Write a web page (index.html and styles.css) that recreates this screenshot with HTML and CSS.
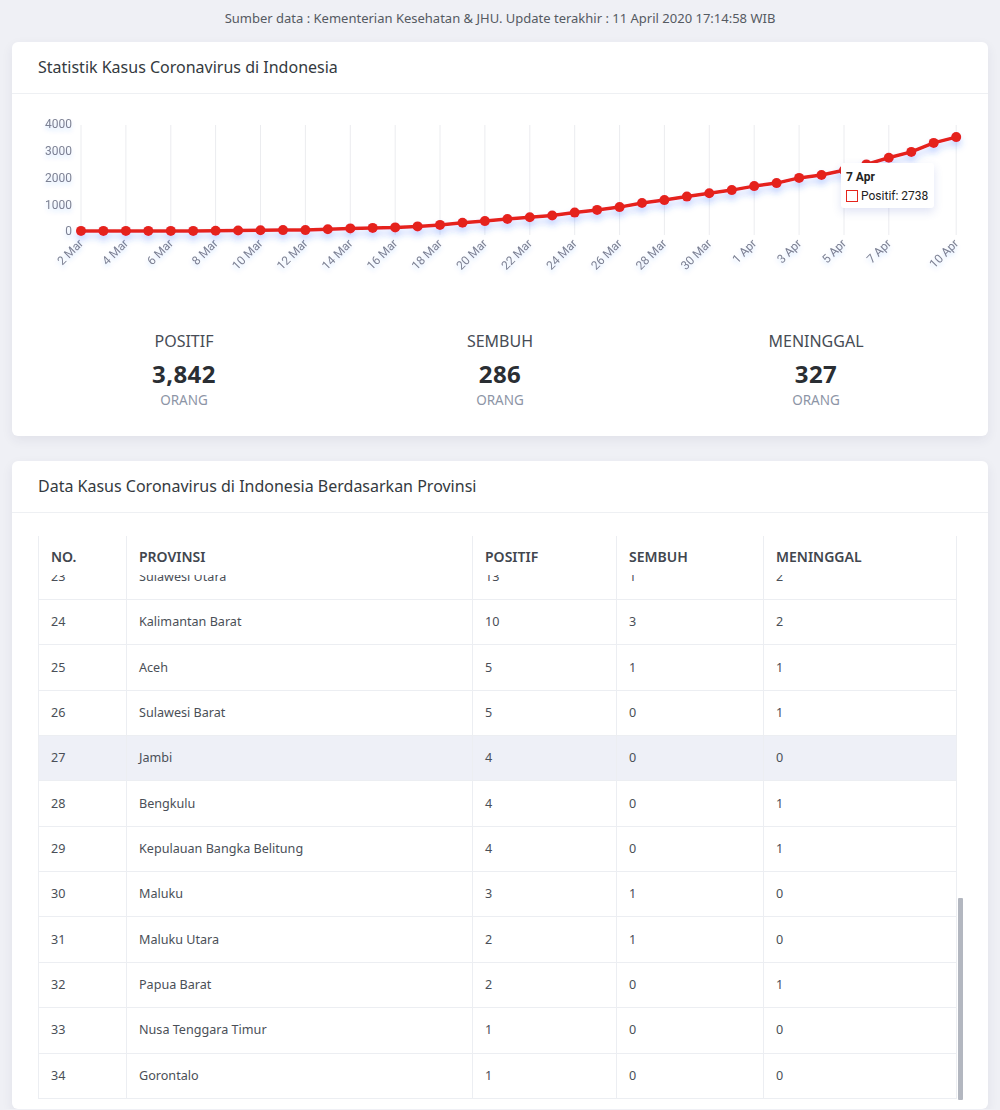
FILE: index.html
```html
<!DOCTYPE html>
<html lang="id">
<head>
<meta charset="utf-8">
<title>Statistik Kasus Coronavirus di Indonesia</title>
<link rel="stylesheet" href="styles.css">
</head>
<body>
<p class="source">Sumber data : Kementerian Kesehatan &amp; JHU. Update terakhir : 11 April 2020 17:14:58 WIB</p>

<section class="card">
  <header class="card-header">Statistik Kasus Coronavirus di Indonesia</header>
  <div class="chart-wrap">
    <svg class="chart" viewBox="12 100 976 190" width="976" height="190">
      <defs>
        <filter id="glow" x="-5%" y="-30%" width="110%" height="170%">
          <feDropShadow dx="0" dy="5" stdDeviation="3" flood-color="#2f6bff" flood-opacity="0.28"/>
        </filter>
        <filter id="tglow" x="-20%" y="-20%" width="140%" height="160%">
          <feDropShadow dx="0" dy="3" stdDeviation="2" flood-color="#2f6bff" flood-opacity="0.18"/>
        </filter>
      </defs>
      <g class="grid">
        <line x1="81" y1="125" x2="81" y2="235"/>
        <line x1="125.9" y1="125" x2="125.9" y2="235"/>
        <line x1="170.8" y1="125" x2="170.8" y2="235"/>
        <line x1="215.6" y1="125" x2="215.6" y2="235"/>
        <line x1="260.5" y1="125" x2="260.5" y2="235"/>
        <line x1="305.4" y1="125" x2="305.4" y2="235"/>
        <line x1="350.3" y1="125" x2="350.3" y2="235"/>
        <line x1="395.2" y1="125" x2="395.2" y2="235"/>
        <line x1="440" y1="125" x2="440" y2="235"/>
        <line x1="484.9" y1="125" x2="484.9" y2="235"/>
        <line x1="529.8" y1="125" x2="529.8" y2="235"/>
        <line x1="574.7" y1="125" x2="574.7" y2="235"/>
        <line x1="619.6" y1="125" x2="619.6" y2="235"/>
        <line x1="664.4" y1="125" x2="664.4" y2="235"/>
        <line x1="709.3" y1="125" x2="709.3" y2="235"/>
        <line x1="754.2" y1="125" x2="754.2" y2="235"/>
        <line x1="799.1" y1="125" x2="799.1" y2="235"/>
        <line x1="844" y1="125" x2="844" y2="235"/>
        <line x1="888.8" y1="125" x2="888.8" y2="235"/>
        <line x1="956.2" y1="125" x2="956.2" y2="235"/>
      </g>
      <g class="axis-label y-label" filter="url(#tglow)">
        <text x="72" y="128">4000</text>
        <text x="72" y="155">3000</text>
        <text x="72" y="182">2000</text>
        <text x="72" y="209">1000</text>
        <text x="72" y="235">0</text>
      </g>
      <g class="axis-label x-label" filter="url(#tglow)">
        <text x="84" y="244" transform="rotate(-45 84 244)">2 Mar</text>
        <text x="128.9" y="244" transform="rotate(-45 128.9 244)">4 Mar</text>
        <text x="173.8" y="244" transform="rotate(-45 173.8 244)">6 Mar</text>
        <text x="218.6" y="244" transform="rotate(-45 218.6 244)">8 Mar</text>
        <text x="263.5" y="244" transform="rotate(-45 263.5 244)">10 Mar</text>
        <text x="308.4" y="244" transform="rotate(-45 308.4 244)">12 Mar</text>
        <text x="353.3" y="244" transform="rotate(-45 353.3 244)">14 Mar</text>
        <text x="398.2" y="244" transform="rotate(-45 398.2 244)">16 Mar</text>
        <text x="443" y="244" transform="rotate(-45 443 244)">18 Mar</text>
        <text x="487.9" y="244" transform="rotate(-45 487.9 244)">20 Mar</text>
        <text x="532.8" y="244" transform="rotate(-45 532.8 244)">22 Mar</text>
        <text x="577.7" y="244" transform="rotate(-45 577.7 244)">24 Mar</text>
        <text x="622.6" y="244" transform="rotate(-45 622.6 244)">26 Mar</text>
        <text x="667.4" y="244" transform="rotate(-45 667.4 244)">28 Mar</text>
        <text x="712.3" y="244" transform="rotate(-45 712.3 244)">30 Mar</text>
        <text x="757.2" y="244" transform="rotate(-45 757.2 244)">1 Apr</text>
        <text x="802.1" y="244" transform="rotate(-45 802.1 244)">3 Apr</text>
        <text x="847" y="244" transform="rotate(-45 847 244)">5 Apr</text>
        <text x="891.8" y="244" transform="rotate(-45 891.8 244)">7 Apr</text>
        <text x="959.2" y="244" transform="rotate(-45 959.2 244)">10 Apr</text>
      </g>
      <g class="series" filter="url(#glow)">
        <polyline class="series-line" points="81,230.9 103.4,230.9 125.9,230.9 148.3,230.9 170.8,230.9 193.2,230.9 215.6,230.8 238.1,230.5 260.5,230.3 283,230.1 305.4,230.1 327.8,229.2 350.3,228.4 372.7,227.9 395.2,227.4 417.6,226.4 440,224.9 462.5,222.7 484.9,221.1 507.4,219 529.8,217.3 552.2,215.5 574.7,212.6 597.1,209.9 619.6,207.1 642,203 664.4,200.1 686.9,196.6 709.3,193.2 731.8,190.1 754.2,186.1 776.6,183.1 799.1,177.9 821.5,175 844,170.2 866.4,164.4 888.8,157.8 911.3,151.9 933.7,142.9 956.2,137.1"/>
        <g class="series-dot">
          <circle cx="81" cy="230.9" r="5"/><circle cx="103.4" cy="230.9" r="5"/><circle cx="125.9" cy="230.9" r="5"/><circle cx="148.3" cy="230.9" r="5"/><circle cx="170.8" cy="230.9" r="5"/><circle cx="193.2" cy="230.9" r="5"/><circle cx="215.6" cy="230.8" r="5"/><circle cx="238.1" cy="230.5" r="5"/><circle cx="260.5" cy="230.3" r="5"/><circle cx="283" cy="230.1" r="5"/><circle cx="305.4" cy="230.1" r="5"/><circle cx="327.8" cy="229.2" r="5"/><circle cx="350.3" cy="228.4" r="5"/><circle cx="372.7" cy="227.9" r="5"/><circle cx="395.2" cy="227.4" r="5"/><circle cx="417.6" cy="226.4" r="5"/><circle cx="440" cy="224.9" r="5"/><circle cx="462.5" cy="222.7" r="5"/><circle cx="484.9" cy="221.1" r="5"/><circle cx="507.4" cy="219" r="5"/><circle cx="529.8" cy="217.3" r="5"/><circle cx="552.2" cy="215.5" r="5"/><circle cx="574.7" cy="212.6" r="5"/><circle cx="597.1" cy="209.9" r="5"/><circle cx="619.6" cy="207.1" r="5"/><circle cx="642" cy="203" r="5"/><circle cx="664.4" cy="200.1" r="5"/><circle cx="686.9" cy="196.6" r="5"/><circle cx="709.3" cy="193.2" r="5"/><circle cx="731.8" cy="190.1" r="5"/><circle cx="754.2" cy="186.1" r="5"/><circle cx="776.6" cy="183.1" r="5"/><circle cx="799.1" cy="177.9" r="5"/><circle cx="821.5" cy="175" r="5"/><circle cx="844" cy="170.2" r="5"/><circle cx="866.4" cy="164.4" r="5"/><circle cx="888.8" cy="157.8" r="5"/><circle cx="911.3" cy="151.9" r="5"/><circle cx="933.7" cy="142.9" r="5"/><circle cx="956.2" cy="137.1" r="5"/>
        </g>
      </g>
    </svg>
    <div class="tooltip">
      <div class="tooltip-title">7 Apr</div>
      <div class="tooltip-row"><span class="tooltip-marker"></span>Positif: 2738</div>
    </div>
  </div>
  <div class="stats">
    <div class="stat">
      <div class="stat-label">POSITIF</div>
      <div class="stat-value">3,842</div>
      <div class="stat-unit">ORANG</div>
    </div>
    <div class="stat">
      <div class="stat-label">SEMBUH</div>
      <div class="stat-value">286</div>
      <div class="stat-unit">ORANG</div>
    </div>
    <div class="stat">
      <div class="stat-label">MENINGGAL</div>
      <div class="stat-value">327</div>
      <div class="stat-unit">ORANG</div>
    </div>
  </div>
</section>

<section class="card card-table">
  <header class="card-header">Data Kasus Coronavirus di Indonesia Berdasarkan Provinsi</header>
  <div class="table-body">
    <div class="table-box">
      <table class="data-table head">
        <colgroup><col class="c1"><col class="c2"><col class="c3"><col class="c4"><col class="c5"></colgroup>
        <thead>
          <tr><th>NO.</th><th>PROVINSI</th><th>POSITIF</th><th>SEMBUH</th><th>MENINGGAL</th></tr>
        </thead>
      </table>
      <div class="scroll-view">
        <table class="data-table rows">
          <colgroup><col class="c1"><col class="c2"><col class="c3"><col class="c4"><col class="c5"></colgroup>
          <tbody>
            <tr><td>23</td><td>Sulawesi Utara</td><td>13</td><td>1</td><td>2</td></tr>
            <tr><td>24</td><td>Kalimantan Barat</td><td>10</td><td>3</td><td>2</td></tr>
            <tr><td>25</td><td>Aceh</td><td>5</td><td>1</td><td>1</td></tr>
            <tr><td>26</td><td>Sulawesi Barat</td><td>5</td><td>0</td><td>1</td></tr>
            <tr class="hover"><td>27</td><td>Jambi</td><td>4</td><td>0</td><td>0</td></tr>
            <tr><td>28</td><td>Bengkulu</td><td>4</td><td>0</td><td>1</td></tr>
            <tr><td>29</td><td>Kepulauan Bangka Belitung</td><td>4</td><td>0</td><td>1</td></tr>
            <tr><td>30</td><td>Maluku</td><td>3</td><td>1</td><td>0</td></tr>
            <tr><td>31</td><td>Maluku Utara</td><td>2</td><td>1</td><td>0</td></tr>
            <tr><td>32</td><td>Papua Barat</td><td>2</td><td>0</td><td>1</td></tr>
            <tr><td>33</td><td>Nusa Tenggara Timur</td><td>1</td><td>0</td><td>0</td></tr>
            <tr><td>34</td><td>Gorontalo</td><td>1</td><td>0</td><td>0</td></tr>
          </tbody>
        </table>
      </div>
      <div class="scroll-thumb"></div>
    </div>
  </div>
</section>
</body>
</html>
```

FILE: styles.css
```css
* { box-sizing: border-box; }

html, body {
  margin: 0;
  padding: 0;
  background: #eff0f5;
  overflow: hidden;
}

body {
  padding: 8px 12px 0;
  font-family: "Noto Sans", "Open Sans", sans-serif;
  color: #333;
}

.source {
  margin: 0 0 14px;
  height: 20px;
  line-height: 20px;
  text-align: center;
  font-size: 13px;
  color: #555a62;
}

.card {
  background: #fff;
  border-radius: 6px;
  box-shadow: 0 4px 12px rgba(40, 45, 80, 0.07);
}

.card + .card {
  margin-top: 25px;
}

.card-header {
  height: 52px;
  padding: 0 26px;
  line-height: 51px;
  font-size: 16px;
  color: #343a40;
  border-bottom: 1px solid #eef0f3;
}

.chart-wrap {
  position: relative;
  margin-top: 6px;
  height: 190px;
}

.chart {
  display: block;
}

.grid line {
  stroke: #ebecef;
  stroke-width: 1;
}

.axis-label {
  font-family: Roboto, "Liberation Sans", sans-serif;
  font-size: 12px;
  fill: #7c8193;
}

.y-label text,
.x-label text {
  text-anchor: end;
}

.series-line {
  fill: none;
  stroke: #e5241c;
  stroke-width: 3.5;
  stroke-linejoin: round;
}

.series-dot circle {
  fill: #e5241c;
}

.tooltip {
  position: absolute;
  left: 829px;
  top: 63px;
  width: 93px;
  height: 45px;
  padding: 6px 5px 0;
  background: #fff;
  border-radius: 3px;
  box-shadow: 0 4px 10px rgba(60, 90, 190, 0.16);
  font-family: Roboto, "Liberation Sans", sans-serif;
  font-size: 12px;
  color: #222;
}

.tooltip-title {
  font-weight: 700;
  line-height: 16px;
}

.tooltip-row {
  display: flex;
  align-items: center;
  gap: 3px;
  margin-top: 3px;
  line-height: 16px;
}

.tooltip-marker {
  width: 12px;
  height: 12px;
  border: 1.5px solid #e5241c;
}

.stats {
  display: grid;
  grid-template-columns: repeat(3, 1fr);
  padding: 40px 14px 26px;
  text-align: center;
}

.stat-label {
  font-size: 16px;
  line-height: 22px;
  color: #474c55;
}

.stat-value {
  margin-top: 7px;
  font-size: 24px;
  font-weight: 700;
  letter-spacing: 0.4px;
  line-height: 30px;
  color: #2a2e33;
}

.stat-unit {
  margin-top: 1px;
  font-size: 13.5px;
  line-height: 20px;
  color: #8d95a6;
}

.table-body {
  padding: 23px 31px 10px 26px;
}

.table-box {
  position: relative;
  width: 919px;
  border-left: 1px solid #eceef2;
  border-right: 1px solid #eceef2;
}

.data-table {
  width: 917px;
  table-layout: fixed;
  border-collapse: separate;
  border-spacing: 0;
  font-size: 12.6px;
  color: #4a4f57;
}

.c1 { width: 87px; }
.c2 { width: 346px; }
.c3 { width: 144px; }
.c4 { width: 147px; }
.c5 { width: 193px; }

.data-table th,
.data-table td {
  padding: 0 12px;
  text-align: left;
  white-space: nowrap;
}

.data-table th + th,
.data-table td + td {
  border-left: 1px solid #eceef2;
}

.data-table th {
  height: 39px;
  padding-top: 11px;
  padding-bottom: 8px;
  font-size: 14px;
  font-weight: 600;
  line-height: 20px;
  color: #41464e;
}

.scroll-view {
  height: 524px;
  overflow: hidden;
}

.rows {
  margin-top: -20.4px;
}

.data-table td {
  height: 45.36px;
  line-height: 20px;
  border-bottom: 1px solid #eceef2;
}

.data-table tr.hover td {
  background: #eef0f7;
}

.scroll-thumb {
  position: absolute;
  left: 919px;
  top: 362px;
  width: 5px;
  height: 202px;
  border-radius: 1px;
  background: #b3b7c0;
}
```
